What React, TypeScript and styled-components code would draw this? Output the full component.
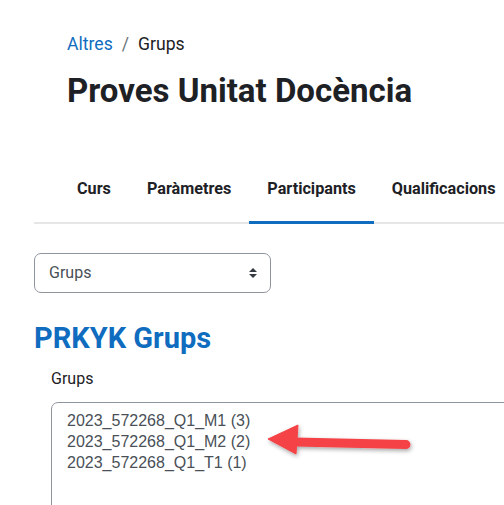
import React from "react";
import styled, { createGlobalStyle } from "styled-components";

const GlobalStyle = createGlobalStyle`
  html, body { margin: 0; padding: 0; background: #fff; overflow: hidden; }
  body { font-family: Roboto, "Liberation Sans", sans-serif; color: #1d2125; }
`;

const Page = styled.div`
  position: relative;
  width: 504px;
  height: 505px;
  overflow: hidden;
  padding-left: 34px;
  box-sizing: border-box;
`;

const Header = styled.header`
  padding: 32px 0 0 33px;
`;

const Breadcrumb = styled.nav`
  display: flex;
  align-items: center;
  font-size: 17.6px;
  line-height: 24px;
  gap: 9px;
`;

const Crumb = styled.a<{ $link?: boolean }>`
  color: ${(p) => (p.$link ? "#0f6cbf" : "#1d2125")};
  text-decoration: none;
`;

const Sep = styled.span`
  color: #6a737b;
`;

const Title = styled.h1`
  margin: 15px 0 0;
  font-size: 33px;
  line-height: 1.2;
  font-weight: 700;
  color: #1d2125;
  white-space: nowrap;
`;

const Tabs = styled.ul`
  list-style: none;
  margin: 50px 0 0;
  padding: 0 0 0 25px;
  display: flex;
  border-bottom: 2px solid #e6e6e6;
  white-space: nowrap;
`;

const Tab = styled.li<{ $active?: boolean }>`
  padding: 16px 18px 20px;
  margin-bottom: -2px;
  font-size: 16.2px;
  line-height: 24px;
  font-weight: 700;
  color: #1d2125;
  border-bottom: 3px solid ${(p) => (p.$active ? "#0f6cbf" : "transparent")};
  flex: none;
`;

const SelectBox = styled.div`
  margin-top: 29px;
  width: 237px;
  height: 40px;
  box-sizing: border-box;
  border: 1px solid #8f959e;
  border-radius: 7px;
  display: flex;
  align-items: center;
  justify-content: space-between;
  padding: 0 13px 0 14px;
  font-size: 16px;
  color: #495057;
`;

const SectionTitle = styled.h2`
  margin: 29px 0 0;
  font-size: 29px;
  line-height: 33px;
  font-weight: 700;
  color: #0f6cbf;
`;

const FieldLabel = styled.div`
  margin: 12px 0 0 17px;
  font-size: 16px;
  line-height: 24px;
  color: #1d2125;
`;

const ListBox = styled.div`
  margin: 11px 0 0 17px;
  width: 480px;
  height: 140px;
  box-sizing: border-box;
  border: 1px solid #8f959e;
  border-radius: 7px 0 0 0;
  padding: 7px 0 0 15px;
  font-family: "Liberation Sans", Arial, sans-serif;
  font-size: 16px;
  line-height: 21px;
  color: #495057;
`;

const Option = styled.div`
  white-space: nowrap;
`;

const ArrowSvg = styled.svg`
  position: absolute;
  left: 255px;
  top: 412px;
  overflow: visible;
`;

export default function App() {
  return (
    <>
      <GlobalStyle />
      <Page>
        <Header>
          <Breadcrumb>
            <Crumb $link href="#">Altres</Crumb>
            <Sep>/</Sep>
            <Crumb>Grups</Crumb>
          </Breadcrumb>
          <Title>Proves Unitat Docència</Title>
        </Header>
        <Tabs>
          <Tab>Curs</Tab>
          <Tab>Paràmetres</Tab>
          <Tab $active>Participants</Tab>
          <Tab>Qualificacions</Tab>
        </Tabs>
        <SelectBox>
          <span>Grups</span>
          <svg width="8" height="10" viewBox="0 0 8 10">
            <path d="M4 0 L8 4 L0 4 Z M0 6 L8 6 L4 10 Z" fill="#343a40" />
          </svg>
        </SelectBox>
        <SectionTitle>PRKYK Grups</SectionTitle>
        <FieldLabel>Grups</FieldLabel>
        <ListBox>
          <Option>2023_572268_Q1_M1 (3)</Option>
          <Option>2023_572268_Q1_M2 (2)</Option>
          <Option>2023_572268_Q1_T1 (1)</Option>
        </ListBox>
        <ArrowSvg width="170" height="60" viewBox="0 0 170 60">
          <defs>
            <filter id="sh" x="-20%" y="-50%" width="140%" height="200%">
              <feDropShadow dx="1" dy="2" stdDeviation="2" floodColor="#000" floodOpacity="0.35" />
            </filter>
          </defs>
          <g filter="url(#sh)" fill="#f44346" stroke="#f44346">
            <line x1="40" y1="30" x2="151" y2="32.5" strokeWidth="9" strokeLinecap="round" />
            <polygon points="13,27 43,13 41,42" strokeWidth="1" strokeLinejoin="round" />
          </g>
        </ArrowSvg>
      </Page>
    </>
  );
}
